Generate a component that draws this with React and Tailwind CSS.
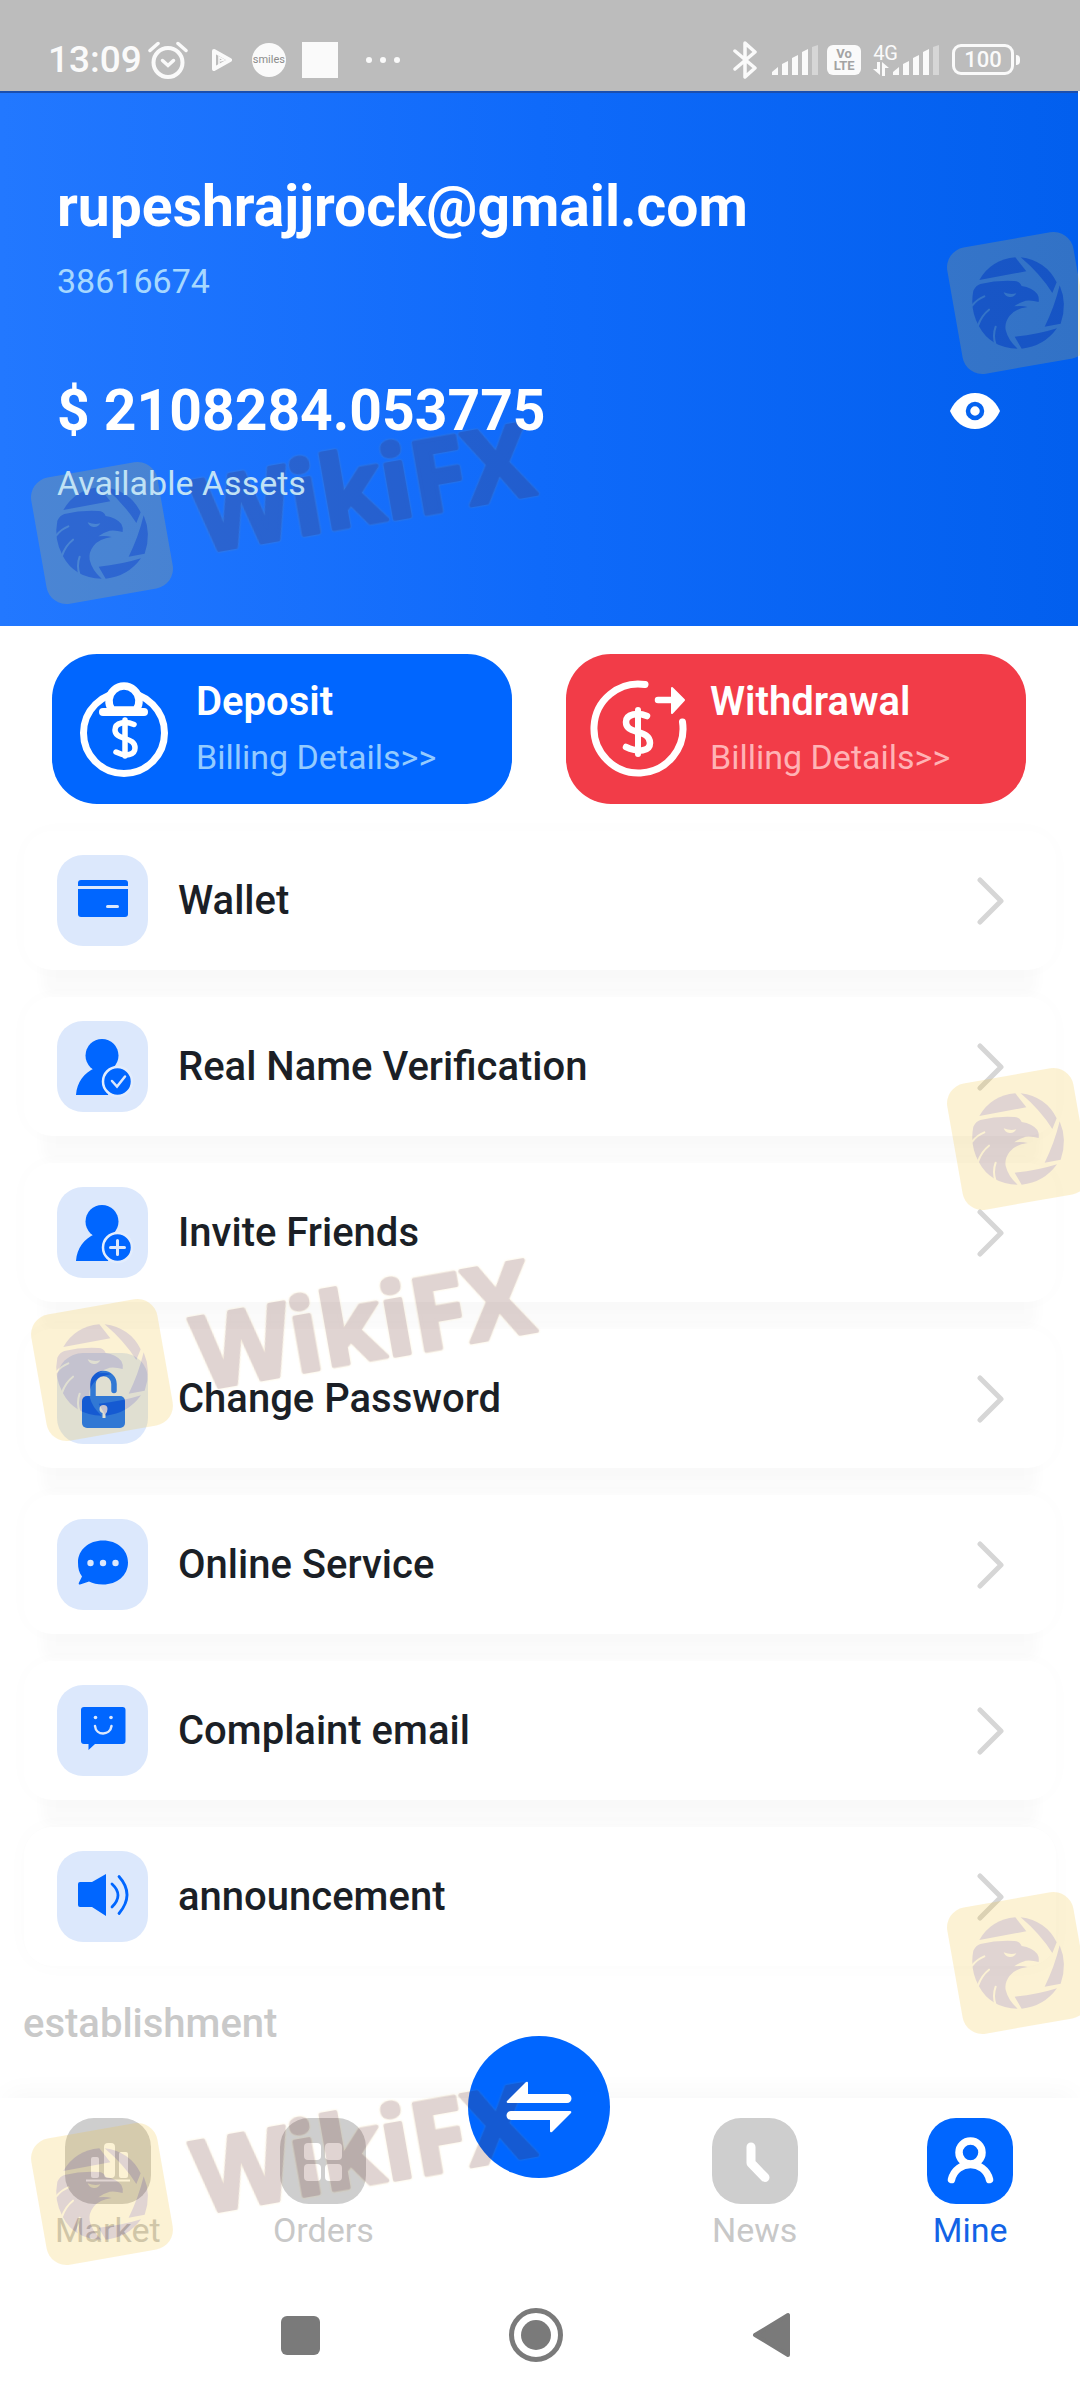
import React from "react";

const BLUE = "#0066ff";

function SignalBars({ className }) {
  return (
    <svg viewBox="0 0 48 32" className={className} aria-hidden="true">
      <g fill="#fafafa">
        <path d="M1 31v-3l6-5v8z" />
        <path d="M11 31V20l6-3v14z" />
        <path d="M21 31V14l6-3v20z" />
        <path d="M31 31V8l6-3v26z" />
      </g>
      <path d="M41 31V3l6-2v30z" fill="#d6d6d6" />
    </svg>
  );
}

function StatusBar() {
  return (
    <div className="flex h-[91px] items-center justify-between bg-[#bcbcbc] pt-7 pr-[60px] pl-12 text-[#fafafa]">
      <div className="flex items-center">
        <span className="text-[37px] leading-[40px] font-medium">13:09</span>
        <svg viewBox="0 0 40 38" className="ml-1.5 h-[38px] w-10" fill="none" stroke="#fafafa" aria-label="Alarm">
          <circle cx="20" cy="21.500" r="14.500" strokeWidth="4" />
          <path d="M14.500 19.500l5.500 5 5.500-5" strokeWidth="3.500" strokeLinecap="round" />
          <path d="M2 9.500L10 2.500M38 9.500L30 2.500" strokeWidth="3.500" strokeLinecap="round" />
        </svg>
        <svg viewBox="0 0 20 22" className="ml-6 h-[22px] w-5" aria-hidden="true">
          <path d="M2 2L18 11 2 20z" fill="none" stroke="#fafafa" strokeWidth="4" strokeLinejoin="round" />
          <path d="M7 16V8l5 3-4 1" fill="none" stroke="#fafafa" strokeWidth="1.500" />
        </svg>
        <span className="ml-5 flex size-[34px] items-center justify-center rounded-full bg-[#fafafa] text-[11px] leading-none text-[#8b8b8b]">smiles</span>
        <span className="ml-4 size-9 bg-[#fafafa]" />
        <span className="ml-7 flex gap-2">
          <span className="size-1.5 rounded-full bg-[#fafafa]" />
          <span className="size-1.5 rounded-full bg-[#fafafa]" />
          <span className="size-1.5 rounded-full bg-[#fafafa]" />
        </span>
      </div>
      <div className="flex items-center">
        <svg viewBox="0 0 24 38" className="h-[38px] w-6" fill="none" stroke="#fafafa" strokeWidth="3.500" strokeLinecap="round" strokeLinejoin="round" aria-label="Bluetooth">
          <path d="M2 10l20 17-10 9V2l10 9L2 28" />
        </svg>
        <SignalBars className="ml-3.5 h-8 w-12" />
        <span className="ml-2 flex h-[30px] w-[34px] flex-col items-center justify-center rounded-md bg-[#fafafa] text-[13px] leading-[12px] font-bold text-[#a3a3a3]">
          <span>Vo</span>
          <span>LTE</span>
        </span>
        <span className="ml-3 flex items-end">
          <span className="flex flex-col">
            <span className="text-[20px] leading-[18px]">4G</span>
            <svg viewBox="0 0 16 14" className="h-3.5 w-4" fill="#fafafa" aria-hidden="true">
              <path d="M4 0h3v13L0 7h4zM9 14V0l7 6h-4v8z" />
            </svg>
          </span>
          <SignalBars className="-ml-1.5 h-8 w-12" />
        </span>
        <span className="ml-3 flex h-[31px] w-[62px] items-center justify-center rounded-[9px] border-[3px] border-[#fafafa] text-[22px] leading-none font-medium">100</span>
        <span className="ml-0.5 h-2.5 w-1 rounded-r bg-[#fafafa]" />
      </div>
    </div>
  );
}

function AccountHeader() {
  return (
    <header className="mr-0.5 border-t-2 border-[#1b4fae] bg-linear-to-r from-[#2278ff] via-[#0f6afa] to-[#025fee] pt-[82px] pr-[78px] pb-[123px] pl-[57px]">
      <div className="relative z-20 text-white">
        <h1 className="text-[57px] leading-[64px] font-bold">rupeshrajjrock@gmail.com</h1>
        <p className="mt-[22px] text-[34px] leading-[40px] text-[#a6d8ff]">38616674</p>
        <div className="mt-[78px] flex items-center justify-between">
          <p className="text-[57px] leading-[64px] font-bold">$ 2108284.053775</p>
          <button type="button" aria-label="Hide balance">
            <svg viewBox="0 0 50 36" className="h-9 w-[50px]">
              <path d="M0 18C5 7 14 0 25 0s20 7 25 18c-5 11-14 18-25 18S5 29 0 18z" fill="#fff" />
              <circle cx="25" cy="18" r="7" fill="none" stroke="#0563f0" strokeWidth="4.500" />
            </svg>
          </button>
        </div>
        <p className="mt-5 text-[34px] leading-[40px] text-[#c0e2f5]">Available Assets</p>
      </div>
    </header>
  );
}

function DepositIcon() {
  return (
    <svg viewBox="0 0 100 100" className="size-[100px] shrink-0" fill="none" stroke="#fff" strokeLinecap="round" aria-hidden="true">
      <circle cx="50" cy="54" r="40.500" strokeWidth="7" />
      <path d="M38 31a15 15 0 1 1 24 0z" fill={BLUE} strokeWidth="7.500" />
      <path d="M29 33h41" strokeWidth="8" />
      <path d="M51 41v36" strokeWidth="5.500" />
      <path d="M60 45.500C52 42 41 43 41 51c0 6 6 7 10 8.500 6 2 10 4 10 9.500 0 7-9 9-19 4" strokeWidth="5.500" />
    </svg>
  );
}

function WithdrawalIcon() {
  return (
    <svg viewBox="0 0 100 100" className="size-[100px] shrink-0" fill="none" stroke="#fff" strokeLinecap="round" aria-hidden="true">
      <path d="M57 5.500A44.500 44.500 0 1 0 94.500 43" strokeWidth="7" />
      <path d="M70 21h15" strokeWidth="6.500" />
      <path d="M84 9l12 12-12 13z" fill="#fff" strokeWidth="2" strokeLinejoin="round" />
      <path d="M50 31v44" strokeWidth="6" />
      <path d="M59 37c-9-4-21-2-21 6 0 7 6 8 12 10s12 4 12 11c0 8-11 10-24 4" strokeWidth="6.500" />
    </svg>
  );
}

function ActionButton({ icon, title, tone, note }) {
  return (
    <button type="button" className={`flex h-[150px] items-center gap-[22px] rounded-[45px] pl-[22px] text-left ${tone}`}>
      {icon}
      <span className="flex flex-col gap-[11px] pb-1">
        <span className="text-[40px] leading-[48px] font-semibold text-white">{title}</span>
        <span className={`text-[34px] leading-[40px] ${note}`}>Billing Details&gt;&gt;</span>
      </span>
    </button>
  );
}

const PERSON = (
  <>
    <circle cx="45" cy="34.500" r="16.500" />
    <path d="M35 44h20l4 9-8 21H19c1-13 8-22 19-27z" />
    <circle cx="60.500" cy="60.500" r="14.500" stroke="#e3edfd" strokeWidth="2.500" />
  </>
);

const ROWS = [
  {
    label: "Wallet",
    icon: (
      <>
        <rect x="21" y="25" width="50" height="37" rx="3" />
        <path d="M21 32.500h50" stroke="#dce8fc" strokeWidth="3" />
        <path d="M50.500 51.500h10" stroke="#dce8fc" strokeWidth="3" strokeLinecap="round" />
      </>
    ),
  },
  {
    label: "Real Name Verification",
    icon: (
      <>
        {PERSON}
        <path d="M55 60l5 5.500 8-10" fill="none" stroke="#dce8fc" strokeWidth="2.500" strokeLinecap="round" />
      </>
    ),
  },
  {
    label: "Invite Friends",
    icon: (
      <>
        {PERSON}
        <path d="M53.500 60.500h14M60.500 53.500v14" stroke="#dce8fc" strokeWidth="3" strokeLinecap="round" />
      </>
    ),
  },
  {
    label: "Change Password",
    icon: (
      <>
        <rect x="25" y="43" width="43" height="32" rx="5" />
        <path d="M36 44V31a10.500 10.500 0 0 1 21 0v6.500" fill="none" stroke={BLUE} strokeWidth="5.500" strokeLinecap="round" />
        <path d="M42.500 56a4 4 0 0 1 8 0q0 3-2 5v4h-3v-5q-3-1-3-4z" fill="#dce8fc" />
      </>
    ),
  },
  {
    label: "Online Service",
    icon: (
      <>
        <path d="M46 21.500c14 0 25 9 25 22s-11 22-25 22c-6 0-10-1-14-3l-9 3q-2 0-1-2l3-6c-3-4-4-8-4-14 0-13 11-22 25-22z" />
        <g fill="#dce8fc">
          <circle cx="33.500" cy="44" r="3.200" />
          <circle cx="46" cy="44" r="3.200" />
          <circle cx="58.500" cy="44" r="3.200" />
        </g>
      </>
    ),
  },
  {
    label: "Complaint email",
    icon: (
      <>
        <path d="M27 22h38.500q3 0 3 3v31q0 3-3 3H38l-6.500 6V59H27q-3 0-3-3V25q0-3 3-3z" />
        <g fill="#dce8fc">
          <circle cx="38.500" cy="32.500" r="1.800" />
          <circle cx="54" cy="32.500" r="1.800" />
        </g>
        <path d="M38 41c1 10 15 10 16.500 0" fill="none" stroke="#dce8fc" strokeWidth="2.500" strokeLinecap="round" />
      </>
    ),
  },
  {
    label: "announcement",
    icon: (
      <>
        <path d="M23 31h12l14-8v42l-14-9H23q-2 0-2-2V33q0-2 2-2z" />
        <path d="M55 33q12 11 0 23M62 25.500q16 18 0 37" fill="none" stroke={BLUE} strokeWidth="2.800" strokeLinecap="round" />
      </>
    ),
  },
];

function MenuRow({ label, icon }) {
  return (
    <li className="group">
      <a
        href="#"
        className="flex items-center rounded-[28px] bg-white py-6 pr-[51px] pl-[33px] shadow-[0_44px_12px_-18px_rgba(0,0,0,0.018),0_0_24px_rgba(0,0,0,0.015)] group-last:shadow-[0_0_24px_rgba(0,0,0,0.02)]"
      >
        <span className="size-[91px] rounded-[26px] bg-[#dce8fc]">
          <svg viewBox="0 0 91 91" className="size-full" fill={BLUE} aria-hidden="true">
            {icon}
          </svg>
        </span>
        <span className="ml-[30px] flex-1 text-[40px] leading-[48px] font-medium text-[#1b1f26]">{label}</span>
        <svg viewBox="0 0 28 48" className="h-12 w-7" fill="none" stroke="#d6d6d6" strokeWidth="5" strokeLinecap="round" strokeLinejoin="round" aria-hidden="true">
          <path d="M3 3l21 21L3 45" />
        </svg>
      </a>
    </li>
  );
}

function Tab({ label, active, children }) {
  return (
    <a href="#" className="flex flex-1 flex-col items-center">
      <svg viewBox="0 0 86 86" className="size-[86px]" aria-hidden="true">
        <rect width="86" height="86" rx="29" fill={active ? BLUE : "#cecece"} />
        {children}
      </svg>
      <span className={`mt-1.5 text-[34px] leading-[40px] ${active ? "text-[#1263e6]" : "text-[#c8c8c8]"}`}>{label}</span>
    </a>
  );
}

function TabBar() {
  return (
    <nav className="flex items-start bg-white pt-5 pr-0.5 pb-5 shadow-[0_-12px_24px_-6px_rgba(0,0,0,0.03)]">
      <Tab label="Market">
        <g fill="#fff">
          <rect x="26" y="39" width="8" height="21" rx="2" />
          <rect x="39" y="25" width="11" height="35" rx="4" />
          <rect x="54" y="34" width="9" height="26" rx="2" />
          <rect x="21" y="61.500" width="44" height="2" />
        </g>
      </Tab>
      <Tab label="Orders">
        <g fill="#fff">
          <rect x="24" y="25" width="17" height="17" rx="4" />
          <rect x="45" y="25" width="17" height="17" rx="4" />
          <rect x="24" y="46" width="17" height="17" rx="4" />
          <rect x="45" y="46" width="17" height="17" rx="4" />
        </g>
      </Tab>
      <div className="-mt-[82px] flex flex-1 justify-center">
        <button type="button" aria-label="Trade" className="size-[142px] rounded-full bg-[#0066ff]">
          <svg viewBox="0 0 142 142" className="relative z-20 size-full" fill="#fff">
            <path d="M40 67q-2 0-1-2l19-19q2-1 2 1v11h39a4.500 4.500 0 0 1 0 9z" />
            <path d="M102 75q2 0 1 2L84 96q-2 1-2-1V84H43a4.500 4.500 0 0 1 0-9z" />
          </svg>
        </button>
      </div>
      <Tab label="News">
        <path d="M39 29v16l14 14.500" fill="none" stroke="#fff" strokeWidth="9" strokeLinecap="round" strokeLinejoin="round" />
      </Tab>
      <Tab label="Mine" active>
        <g fill="none" stroke="#fff" strokeWidth="7.500" strokeLinecap="round">
          <circle cx="43.500" cy="34.500" r="11.500" />
          <path d="M24.500 61.500c5-20 33-20 38 0" />
        </g>
      </Tab>
    </nav>
  );
}

function SystemNav() {
  return (
    <div className="flex h-[130px] items-center justify-center gap-[189px] pr-2.5">
      <button type="button" aria-label="Recent apps" className="size-[39px] rounded-md bg-[#7a7a7a]" />
      <button type="button" aria-label="Home" className="flex size-[54px] items-center justify-center rounded-full border-5 border-[#7a7a7a]">
        <span className="size-[30px] rounded-full bg-[#7a7a7a]" />
      </button>
      <button type="button" aria-label="Back">
        <svg viewBox="0 0 38 46" className="h-[46px] w-[38px]">
          <path d="M3 23L36 3v40z" fill="#7a7a7a" stroke="#7a7a7a" strokeWidth="4" strokeLinejoin="round" />
        </svg>
      </button>
    </div>
  );
}

/* Eagle inside a camera aperture on a tilted rounded tile, centred on the origin. */
function EagleBadge() {
  return (
    <>
      <rect x="-64" y="-64" width="128" height="128" rx="20" fill="#f2c02d" transform="rotate(-10)" />
      <g transform="scale(0.3333) translate(-413 -477)" fill="#692d23">
        <path d="M297 408Q332 347 405 340L438 382z" />
        <path d="M421 340Q497 350 529 415L516 447Q480 390 421 340z" />
        <path d="M538 424Q562 480 541 539L493 548Q522 490 538 424z" />
        <path d="M530 553Q490 608 424 614L403 578Q470 572 530 553z" />
        <path d="M279 440Q287 424 300 420Q350 408 402 411Q418 411 424 426Q455 430 471 450Q477 460 475 474Q455 468 436 470Q415 476 402 487Q425 484 442 489Q405 494 388 515Q372 535 376 558Q384 590 412 614Q330 612 295 545Q268 495 279 440z" />
        <g fill="none" stroke="#f2c02d" strokeWidth="6" strokeLinecap="round">
          <path d="M276 484Q290 466 312 457" />
          <path d="M293 545Q303 515 326 497" />
          <path d="M346 604Q336 575 346 548" />
        </g>
        <path d="M370 445q20 8 38 3q-6 12-20 11q-14-2-18-14z" fill="#f2c02d" />
      </g>
    </>
  );
}

function BrandMark({ className }) {
  return (
    <svg viewBox="0 -50 600 300" className={`absolute left-0 h-[300px] w-[600px] overflow-visible opacity-20 ${className}`} aria-hidden="true">
      <g transform="translate(102 133)">
        <EagleBadge />
      </g>
      <text
        x="201"
        y="153"
        transform="rotate(-10 201 153)"
        className="font-['Open_Sans'] text-[100px] font-bold drop-shadow-[0_0_1px_#f2c02d]"
        fill="#692d23"
        stroke="#692d23"
        strokeWidth="4"
        strokeLinejoin="round"
      >
        WikiFX
      </text>
    </svg>
  );
}

function BadgeMark({ className }) {
  return (
    <svg viewBox="-75 -75 150 150" className={`absolute -right-[13px] size-[150px] opacity-20 ${className}`} aria-hidden="true">
      <EagleBadge />
    </svg>
  );
}

function Watermarks() {
  return (
    <div className="pointer-events-none absolute inset-0 z-10 overflow-hidden">
      <BadgeMark className="top-[228px]" />
      <BrandMark className="top-[350px]" />
      <BadgeMark className="top-[1064px]" />
      <BrandMark className="top-[1187px]" />
      <BadgeMark className="top-[1888px]" />
      <BrandMark className="top-[2011px]" />
    </div>
  );
}

export default function App() {
  return (
    <div className="relative min-h-screen overflow-hidden bg-white font-[Roboto,sans-serif]">
      <StatusBar />
      <AccountHeader />
      <main>
        <div className="grid grid-cols-2 gap-[54px] pt-7 pr-[54px] pl-[52px]">
          <ActionButton icon={<DepositIcon />} title="Deposit" tone="bg-[#0066ff]" note="text-[#94cbff]" />
          <ActionButton icon={<WithdrawalIcon />} title="Withdrawal" tone="bg-[#f23c48]" note="text-[#ffb3b5]" />
        </div>
        <ul className="mx-6 mt-[27px] flex flex-col gap-[27px]">
          {ROWS.map((row) => (
            <MenuRow key={row.label} label={row.label} icon={row.icon} />
          ))}
        </ul>
        <h2 className="mt-[34px] mb-[50px] ml-[23px] text-[40px] leading-[48px] font-medium text-[#c9c9c9]">establishment</h2>
      </main>
      <TabBar />
      <SystemNav />
      <Watermarks />
    </div>
  );
}
